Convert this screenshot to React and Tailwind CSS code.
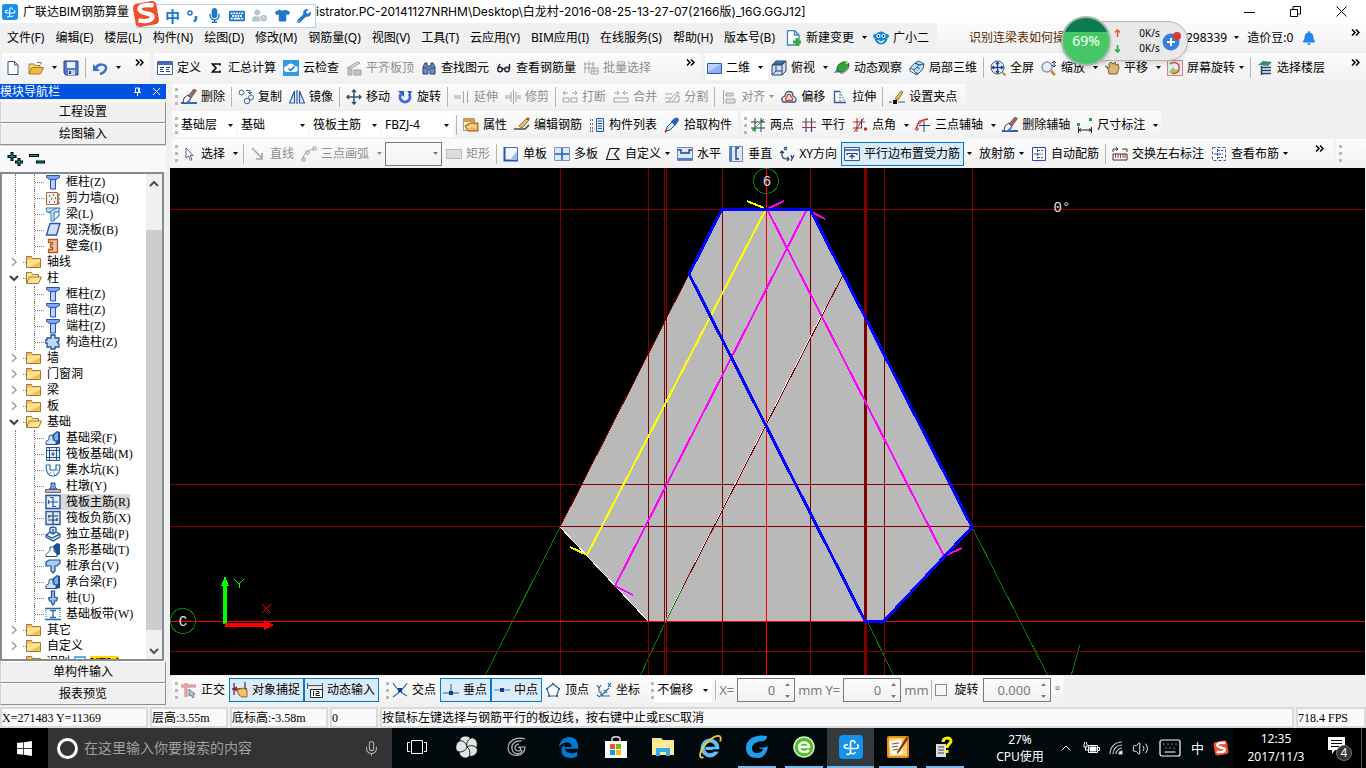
import React, { useState } from 'react';
import { FaWindows, FaMicrophone, FaTshirt, FaWrench, FaKeyboard, FaBell, FaUserClock } from 'react-icons/fa';
import { Mic, Volume2, ChevronUp, Keyboard } from 'lucide-react';

const B = '#2c5aa8';
const N = '#24406e';
const G = '#a3a3a3';

// 16x16 drawings used by the toolbars and the tree
const icons = {
  newDoc: <path d="M3 1.5h6.5L13 5v9.5H3zM9.5 1.5V5H13" fill="#fff" stroke="#38587f" />,
  open: (
    <>
      <path d="M1 14V4h5l1 1.500h5V8" fill="#f5d67d" stroke="#a87c23" />
      <path d="M1 14l3-6.500h11.500L12.500 14z" fill="#f3b945" stroke="#a87c23" />
      <path d="M9 2.500h4v2" fill="none" stroke="#4f7fc0" />
    </>
  ),
  save: (
    <>
      <path d="M1 1h14v14H3l-2-2z" fill="#5a78cc" stroke="#27408c" />
      <path d="M4 2h8v6H4z" fill="#e9effc" />
      <path d="M5 10h7v5H5z" fill="#c7d2ea" />
      <path d="M6 11h2v3H6z" fill="#27408c" />
    </>
  ),
  undo: (
    <>
      <path d="M4 8c2-5 10-4 10 0 0 3-3 5-6 6" fill="none" stroke="#3a6fd0" strokeWidth="2.500" />
      <path d="M1 4v7h7z" fill="#3a6fd0" />
    </>
  ),
  define: (
    <>
      <path d="M.5 1.500h15v13H.5z" fill="#fff" stroke="#4a6896" />
      <path d="M1 2h14v3H1z" fill="#3f6fba" />
      <path d="M3 7.500h4M3 11.500h4M9 7.500h4M9 11.500h4M3 9.500h3M9 9.500h3" stroke={N} />
    </>
  ),
  sigma: <path d="M12 5.500V4H4.500L8 8l-3.500 4H12v-1.500" fill="none" stroke="#111" strokeWidth="1.700" />,
  cloud: (
    <>
      <path d="M0 0h16v16H0z" fill="#2d9be8" />
      <path d="M4 12a3 3 0 010-6 4 4 0 017.500 0A3 3 0 0112 12z" fill="#fff" />
      <path d="M5.500 8.500l2 2 4-4" fill="none" stroke="#1d6fc0" strokeWidth="1.500" />
    </>
  ),
  slabTop: (
    <>
      <path d="M1 8l10-6 3 1-8 5z" fill="#d8d8d8" stroke={G} />
      <path d="M2 9h4v6H2zM8 10h7v5H8z" fill="#c4c4c4" stroke={G} />
    </>
  ),
  find: <path d="M2 14V7l2-4h2v3h4V3h2l2 4v7h-5V9H7v5zM3 8h3M10 8h3" fill="#6f8bc4" stroke={N} />,
  glasses: (
    <g fill="none" stroke="#1d2430" strokeWidth="1.400">
      <circle cx="4" cy="9.500" r="2.300" />
      <circle cx="11" cy="9.500" r="2.300" />
      <path d="M6 9h3M2 8l2-4M13.500 9V4" />
    </g>
  ),
  batch: <path d="M2 2v11M6 1v12M10 2v6M1 4h11M1 8h8M9 8h6v6H8zM9 11h6M11 8v6" fill="none" stroke={G} />,
  plane: (
    <>
      <path d="M.5 3.500h14v10H.5z" fill="#8eb0f5" stroke="#2f57b5" />
      <path d="M1 4h13L1 12z" fill="#bcd0fa" />
    </>
  ),
  cube: (
    <>
      <path d="M1 5l4-4h10v10l-4 4H1z" fill="#cfe0f3" stroke={N} />
      <path d="M1 5l4-4h10l-4 4z" fill="#3c6ca8" />
      <path d="M11 5h-10M11 5v10M11 5l4-4M5 6v5M5 11l-3 3M5 11h6" stroke={N} fill="none" />
    </>
  ),
  orbit: (
    <>
      <path d="M0 13l4-6 3 5z" fill="#5279d6" />
      <ellipse cx="9" cy="7" rx="6.500" ry="4.500" transform="rotate(-35 9 7)" fill="#34a53a" stroke="#16621b" />
      <path d="M6 13c4 1 7-3 9-6" fill="none" stroke="#999" strokeWidth="1.500" />
      <circle cx="13" cy="2.500" r="1.500" fill="#a5e08a" />
    </>
  ),
  local3d: (
    <g fill="#c2dcf1" stroke="#2a628f">
      <path d="M1 8l5-5 4 2-5 5zM6 3l4-2 5 3-5 1zM5 10l5-5 5-1-1 5-6 6z" />
      <path d="M1 8v3l7 4v-3M8 7l3 2" fill="none" />
    </g>
  ),
  full: (
    <>
      <circle cx="7.500" cy="7.500" r="6.500" fill="#eef4ff" stroke="#3a5a8f" />
      <path d="M7.500 2v11M2 7.500h11M6 4l1.500-2L9 4M6 11l1.500 2L9 11M4 6L2 7.500 4 9M11 6l2 1.500L11 9" fill="none" stroke="#1d4390" strokeWidth="1.300" />
      <path d="M12.500 12.500l3 3" stroke="#c08a2b" strokeWidth="2" />
    </>
  ),
  zoom: (
    <>
      <circle cx="6" cy="7" r="5" fill="#e9f0fb" stroke="#8b96a8" strokeWidth="1.500" />
      <path d="M10 11l4 4" stroke="#c08a2b" strokeWidth="2.500" />
      <path d="M13 1v5M11 3l2-2 2 2M11 5l2 2 2-2" stroke="#27457d" fill="none" />
    </>
  ),
  pan: <path d="M1 6l3 3 1 5h8l2-6-1-4-2 1-1-3-2 2-2-2-2 2v4z" fill="#d9b673" stroke="#85632a" />,
  rotateView: (
    <>
      <path d="M.5 .5h15v15H.5z" fill="#dff0f8" stroke="#e07e7e" />
      <path d="M2 12l4-5 3 3 2-1v4H2z" fill="#a9c95b" />
      <path d="M3 4a6 6 0 019 1v5a5 5 0 01-7 3" fill="none" stroke="#d8513d" strokeWidth="1.500" />
    </>
  ),
  floors: (
    <>
      <path d="M1 5l5-4 9 1-4 4z" fill="#2f8d83" />
      <path d="M5 7.500h9M5 10.500h9M4 13.500h10M4.500 6v9" stroke={N} strokeWidth="1.500" />
    </>
  ),
  erase: (
    <>
      <path d="M0 14h16" stroke="#3167b3" strokeWidth="2" />
      <path d="M3 9l4-3 3 3-4 5H2z" fill="#fff" stroke="#2f3f61" />
      <path d="M4 14l5-4 1 1-3 3z" fill="#3f7ae0" />
      <path d="M7 7l6-7 2.500 1.500L10 9z" fill="#a86a54" stroke="#333" strokeWidth=".6" />
    </>
  ),
  copy: (
    <g fill="none" stroke="#3b6493">
      <circle cx="3.500" cy="3.500" r="2.500" />
      <circle cx="9" cy="12" r="2.800" />
      <circle cx="13" cy="8.500" r="2.500" />
      <path d="M8 1.500h4v3M10 3l2 2 2-2" stroke="#555" />
    </g>
  ),
  mirror: <path d="M5.500 2v12H0.500zM10.500 2v12h5zM8 1v14" fill="#e4eefc" stroke={B} strokeWidth="1.200" />,
  move: <path d="M8 1v14M1 8h14M6 3l2-2 2 2M6 13l2 2 2-2M3 6L1 8l2 2M13 6l2 2-2 2" fill="none" stroke="#3a5377" strokeWidth="1.500" />,
  rotate: (
    <>
      <path d="M4 5a5 5 0 108 0" fill="none" stroke="#3971d4" strokeWidth="3" />
      <path d="M1 2h6v6zM10 2h5l-2 4z" fill="#2b5fc0" />
    </>
  ),
  extend: <path d="M0 7h7M0 9h7M9.500 2v12M13.500 2v12" stroke={G} fill="none" />,
  trim: <path d="M0 7h6M0 9h6M8.500 1v14M6 3v10M11 3v10M12 7h4M12 9h4" stroke={G} fill="none" />,
  brk: <path d="M1 4h5M10 4h5M3 2L1 4l2 2M13 2l2 2-2 2M1 9h6v4H1zM9 9h6v4H9z" stroke={G} fill="none" />,
  merge: <path d="M1 4h5M10 4h5M4 2l2 2-2 2M12 2l-2 2 2 2M1 9h14v4H1z" stroke={G} fill="none" />,
  split: <path d="M1 5h7M1 13h14V7h-3M1 9h6M4 13l9-10 2 1-7 9" stroke={G} fill="none" />,
  align: <path d="M2.500 1v14M5 4h7v3H5zM5 10h9v4H5z" fill="#ddd" stroke={G} />,
  offset: (
    <>
      <path d="M2 13c-3-4 0-5 2-6 0-6 8-6 8 0 3 1 4 4 2 6z" fill="#fff" stroke="#2d5780" strokeWidth="1.300" />
      <path d="M5 11.500c-2-2 1-3 1-4 0-3 4-3 4 0 1 1 3 2 1 4z" fill="#fbd9d6" stroke="#d44840" strokeWidth="1.300" />
    </>
  ),
  stretch: (
    <>
      <path d="M8 2.500H2.500v11H14" fill="none" stroke={B} strokeWidth="1.300" />
      <path d="M8 2.500l5 11M8 5v8" stroke={B} strokeDasharray="1.500 1.500" fill="none" />
    </>
  ),
  grip: (
    <>
      <path d="M0 13h3M9 13h7" stroke="#555" />
      <path d="M4 11h4v4H4z" fill="#111" />
      <path d="M6 10l6-8 2 1-5 8z" fill="#e7bf5a" stroke="#6b4a18" strokeWidth=".7" />
    </>
  ),
  prop: (
    <>
      <path d="M.5 1.500h11v12H.5z" fill="#fff7e2" stroke="#9c9c9c" />
      <path d="M1 2h10v3H1z" fill="#e39b38" />
      <path d="M2 9l5-3h8v8H5z" fill="#f2b85d" stroke="#8b5912" />
      <path d="M5 11l4-3 4 3" stroke="#fff" fill="none" />
    </>
  ),
  editBar: (
    <>
      <path d="M0 12h11l4-4" fill="none" stroke="#3f5634" strokeWidth="1.700" />
      <path d="M5 9l7-7 3 1-7 8z" fill="#eac064" stroke="#5d4314" strokeWidth=".7" />
      <path d="M12 2l3 1 .500-2-2-.500z" fill="#b2362c" />
    </>
  ),
  list: (
    <>
      <path d="M1 3h4M1 7h4M1 11h4M1 14h4" stroke={N} strokeDasharray="1 1" strokeWidth="1.500" />
      <path d="M7.500 1.500h7v13h-7z" fill="#dfe9fb" stroke={B} />
      <path d="M9 4h4M9 6.500h4M9 9h4M9 11.500h4" stroke={B} />
    </>
  ),
  pick: (
    <>
      <path d="M2 14l1-4 5-5 3 3-5 5z" fill="#d3e6fb" stroke="#234b8d" />
      <path d="M7 4l4-3c3-1 5 1 3 4l-3 4z" fill="#2f62b5" />
      <path d="M1 15l2-2" stroke="#d22" strokeWidth="2" />
    </>
  ),
  twoPt: (
    <>
      <path d="M5 1v14M11 1v14M1 5h14M1 11h14" stroke="#2a3d63" fill="none" />
      <path d="M2 14L14 2" stroke="#3f9c35" />
      <circle cx="12" cy="4" r="1.600" fill="#249027" />
      <circle cx="4" cy="12" r="1.600" fill="#249027" />
    </>
  ),
  parallel: (
    <>
      <path d="M5 1v14M10.500 1v14" stroke="#2b4a87" strokeWidth="1.200" />
      <path d="M1 5h14M1 10.500h14" stroke="#b32c2c" strokeWidth="1.200" />
    </>
  ),
  angle: (
    <>
      <path d="M5 1v14M1 5h12M1 11h9M12 1L2 15" stroke="#a82828" fill="none" />
      <path d="M9.500 2v9" stroke={N} />
      <circle cx="13.500" cy="12" r="1.700" fill="#d62020" />
    </>
  ),
  threePt: (
    <>
      <path d="M1 13c1-7 4-10 12-11" fill="none" stroke="#cc2a2a" strokeWidth="1.300" />
      <path d="M9 4v11M4 8.500h11" stroke={N} />
      <circle cx="2" cy="12" r="1.300" fill="#fff" stroke="#d62020" />
      <circle cx="5" cy="5" r="1.300" fill="#fff" stroke="#d62020" />
    </>
  ),
  dim: (
    <>
      <path d="M1.500 10v6M14.500 10v6M2 13h12M4 11.500L2 13l2 1.500M12 11.500l2 1.500-2 1.500" stroke="#222" fill="none" />
      <path d="M0 6h3v3H0zM12 1h3v3h-3z" fill="#2fa040" />
    </>
  ),
  cursor: <path d="M5 2v10l2.500-2 2 4.500 1.500-1-2-4H12z" fill="#fff" stroke="#53647d" />,
  line: <path d="M2 2l10 10M12 7v6H6" stroke={G} strokeWidth="1.500" fill="none" />,
  arc: <path d="M2 14C2 8 6 4 13 3M1 12h3v3H1zM5 5h3v3H5zM12 1h3v3h-3z" stroke={G} fill="none" />,
  rect: <path d="M.5 3.500h15v9H.5z" fill="#ddd" stroke="#b8b8b8" />,
  single: (
    <>
      <path d="M1.500 1.500h13v13h-13z" fill="#f3f7ff" stroke="#4a6fb8" />
      <path d="M1.500 1v13.500H15" fill="none" stroke="#2856aa" strokeWidth="2" />
      <path d="M7 14l7-9v9z" fill="#9dbdf1" />
    </>
  ),
  multi: (
    <>
      <path d="M.5 1.500h15v13H.5z" fill="#dce9fb" stroke="#7d95c4" />
      <path d="M8 2v12M1 8h14" stroke="#2856aa" strokeWidth="1.500" />
    </>
  ),
  custom: <path d="M1.500 13.500L5 2.500h9L9.500 8l4.500 5.500z" fill="none" stroke="#222" strokeWidth="1.200" />,
  horiz: (
    <>
      <path d="M.5 1.500h15v13H.5z" fill="#dbe9fd" stroke="#6d8ac0" />
      <path d="M1 12h14v2H1z" fill="#4f7ed0" />
      <path d="M1 4h3v3h8V4h3" stroke={N} strokeWidth="1.400" fill="none" />
    </>
  ),
  vert: (
    <>
      <path d="M1.500 .5h13v15h-13z" fill="#dbe9fd" stroke="#6d8ac0" />
      <path d="M2 1h2v14H2z" fill="#4f7ed0" />
      <path d="M11 2H8v11h3" stroke={N} strokeWidth="1.400" fill="none" />
    </>
  ),
  xy: (
    <g fill="none" stroke="#25446f" strokeWidth="1.200">
      <path d="M5 1l3 3M8 1L5 4M12 9l1 3M15 9l-3 6M3 5v4c0 3 2 4 5 4h2M1 7l2-2 2 2M8 11l2 2-2 2" />
    </g>
  ),
  edgeBar: (
    <>
      <path d="M.5 1.500h15v13H.5z" fill="#eaf2fe" stroke="#3358a0" />
      <path d="M1 3h14v2H1z" fill="#4f7ed0" />
      <path d="M3 9V7.500h10V9M8 13V9M5.500 11L8 9l2.500 2" stroke={N} strokeWidth="1.200" fill="none" />
    </>
  ),
  auto: (
    <>
      <path d="M1.500 1.500h13v13h-13z" fill="#fff" stroke="#3b3fb0" />
      <path d="M6.500 3v10M6 4.500h6M3 8h9M6 11.500h6" stroke="#345a9f" strokeDasharray="3 1" fill="none" />
    </>
  ),
  swap: (
    <>
      <path d="M1 6V3h5M15 6V3h-5M4 1L6 3 4 5" stroke="#333" fill="none" />
      <path d="M1 8h14v6H1z" fill="#fff" stroke="#333" />
      <path d="M3.500 8v4M6 8v4M8.500 8v4M11 8v4M13 8v4" stroke="#a33" />
    </>
  ),
  viewBar: (
    <>
      <path d="M1.500 1.500h13v13h-13z" fill="#fff" stroke="#4a4fa8" strokeDasharray="3 2" />
      <path d="M6.500 3v10M6 4.500h6M3 8h9M6 11.500h6" stroke={B} strokeDasharray="3 1" fill="none" />
    </>
  ),
  ortho: (
    <>
      <path d="M0 4h15M5 1v14" stroke="#dfa3a5" strokeWidth="3.500" />
      <path d="M8 7v7l2-1 2 3 1-1-1-3h2z" fill="#b7c4d8" stroke="#5b6e8c" strokeWidth=".8" />
    </>
  ),
  snap: (
    <>
      <path d="M2 1v12M13 0v8M0 7h15M2 7l3-2M2 7l3 2" stroke="#7c2433" fill="none" strokeWidth="1.300" />
      <path d="M5 8l2 5 3 2h5V8l-4-2z" fill="#edc468" stroke="#8b6820" />
    </>
  ),
  dyn: (
    <>
      <path d="M.5 1v6M15.500 1v6M0 3.500h16" stroke="#555" fill="none" />
      <path d="M3.500 7.500h12v8h-12z" fill="#fff" stroke="#222" />
      <path d="M6.500 9v5M9 9.500h3v2H9v2h4" stroke="#222" fill="none" />
    </>
  ),
  cross: (
    <>
      <path d="M1 1c3 5 8 10 14 13M15 1C12 6 7 11 1 15" stroke="#2470b9" strokeWidth="1.300" fill="none" />
      <path d="M6 6h4v4H6z" fill="#143f8d" />
    </>
  ),
  perp: (
    <>
      <path d="M0 11h16M8 2v9" stroke="#2c5aa8" />
      <path d="M6 9h4v4H6z" fill="#143f8d" />
    </>
  ),
  mid: (
    <>
      <path d="M0 8h16" stroke="#4c80bd" />
      <path d="M6 6h4v4H6z" fill="#143f8d" />
    </>
  ),
  vertex: (
    <>
      <path d="M8 2l6 4.500-2.500 7.500h-7L2 6.500z" fill="#fff" stroke="#2b68a8" strokeWidth="1.200" />
      <path d="M7 1h2v2H7zM1 6h2v2H1zM13 6h2v2h-2zM3 13h2v2H3zM11 13h2v2h-2z" fill="#2b68a8" />
    </>
  ),
  coord: <path d="M1 3l2 3 2-3M3 6v3M12 1l3 4M15 1l-3 4M2 10h3v4h9M5 14l8-8M8 8l3 3M1 13l3 2" fill="none" stroke="#2b68a8" strokeWidth="1.200" />,
  doc2: (
    <>
      <path d="M1.500.500h7L13 5v10H1.500zM8.500.500V5H13" fill="#fff" stroke="#3b85bd" strokeWidth="1.300" />
      <path d="M11 8v8M7 12h8" stroke="#37a93a" strokeWidth="3" />
    </>
  ),
  mascot: (
    <>
      <circle cx="8" cy="8" r="6.500" fill="#168bd8" />
      <circle cx="2" cy="6" r="2" fill="#168bd8" />
      <circle cx="14" cy="6" r="2" fill="#168bd8" />
      <circle cx="5.500" cy="6" r="2" fill="#fff" />
      <circle cx="10.500" cy="6" r="2" fill="#fff" />
      <path d="M5 10c2 3 4 3 6 0" stroke="#fff" fill="none" strokeWidth="1.300" />
      <path d="M5.500 5v2M10.500 5v2" stroke="#124" strokeWidth="1.500" />
    </>
  ),
  column: (
    <>
      <path d="M5.500 5h5v10h-5z" fill="#b9d0fa" stroke="#2850a8" />
      <path d="M1.500 1.500h13v2L11 5.500H5L1.500 3.500z" fill="#7fa6f2" stroke="#2850a8" />
    </>
  ),
  shearWall: (
    <>
      <path d="M1.500 2.500h11v12h-11z" fill="#f1eeee" stroke="#ad6a42" />
      <path d="M4 6h1M8 5h1M6 9h1M10 8h1M4 12h1M9 12h1" stroke="#555" strokeWidth="1.500" />
      <path d="M13 3v12M14 5h1M14 9h1M14 13h1" stroke="#ad6a42" strokeWidth="1.500" />
    </>
  ),
  beam: <path d="M1 2h14l-2 4H9v9H6V7L2 6zM4 6l8-4M9 14l5-4V5" fill="#cfe6fa" stroke="#2774b9" />,
  slab: <path d="M5 1.500h10L11.500 13H1.500z" fill="#cfe0fc" stroke="#2857ab" strokeWidth="1.400" />,
  niche: <path d="M3.500 1.500h9v13h-9v-3h4v-2h-2v-3h2v-2h-4z" fill="#f2c49f" stroke="#b05a28" strokeWidth="1.300" />,
  struct: <path d="M6 1h4v3h4v3l-2 1 2 2v3h-4v2H6v-2H2v-4H0V6h2V4h4z" fill="#c3d8f5" stroke="#27509a" strokeWidth="1.300" />,
  fbeam: (
    <>
      <path d="M7 5l5-4 3 1v12l-4 1z" fill="#1c4f91" />
      <path d="M9 5l4-3v8l-3 1z" fill="#7fb0e6" />
      <path d="M1 14.500v-3l3-2V6l2-1 2 1v4l3 1v3.500z" fill="#cfe2f7" stroke="#1f5497" />
    </>
  ),
  raft: <path d="M1.500 1.500h13v13h-13zM4.500 1v14M11.500 1v14M1 4.500h14M1 11.500h14M7 7h2v2H7z" fill="#e6effc" stroke="#1f5497" />,
  sump: <path d="M1 3h4v5h6V3h4M1 3c0 8 3 11 7 11s7-3 7-11M5 11h1M9 12h1M8 10h1M12 8h1" fill="none" stroke="#2868ae" strokeWidth="1.200" />,
  pier: (
    <>
      <path d="M0.500 11.500h15v3H.5z" fill="#bbb" stroke="#666" />
      <path d="M4 11l2-2V5h4v4l2 2z" fill="#7ba4dd" stroke="#2856a3" />
    </>
  ),
  mainBar: (
    <>
      <path d="M1 1.500h14v13H1z" fill="#eaf2ff" stroke="#2856aa" strokeWidth="1.400" />
      <path d="M3 8h10M8 3v10M8 12.500h3M3.500 6v4M5 3.500h3" stroke="#2856aa" strokeWidth="1.200" />
    </>
  ),
  negBar: (
    <>
      <path d="M1 1.500h14v13H1z" fill="#dce9fb" stroke="#2856aa" strokeWidth="1.400" />
      <path d="M3 6h10M3 10h10M8 2v12M4 5v3M12 8v3" stroke="#24406e" strokeWidth="1.200" />
    </>
  ),
  isolated: <path d="M1 9l4-3V2l3-1 3 1v4l4 2v3l-7 4-7-4zM1 9l6 3 8-4M5 6l3 2 3-2M8 3v5" fill="#cfe0f6" stroke="#1f4f8f" strokeWidth="1.200" />,
  strip: (
    <>
      <path d="M8 4l4-3 3 1v10l-3 2z" fill="#1c4f91" />
      <path d="M1 14.500v-2l4-4V5h4v4l3 3v2.500z" fill="#fff" stroke="#1f5497" />
    </>
  ),
  cap: <path d="M1 4l3-2h11v3l-3 3h-2v5l-2 2-2-2V8H1z" fill="#a9cdf0" stroke="#1f4f8f" strokeWidth="1.200" />,
  pile: <path d="M6.500 1h3v6l3 1-1 3h-2v2L8 15l-1.500-2v-2h-2l-1-3 3-1z" fill="#9ebcf6" stroke="#1f4f8f" strokeWidth="1.200" />,
  band: (
    <>
      <path d="M0 2.500h16M0 13.500h16" stroke="#2868ae" strokeWidth="1.400" />
      <path d="M1 4v8M15 4v8" stroke="#2868ae" strokeDasharray="1 1" />
      <path d="M8 4v8M5 11.500h6M5 4.500h6" stroke="#2868ae" strokeWidth="1.300" />
    </>
  ),
  folder: (
    <>
      <path d="M.5 2.500h5l1 2h8v9H.5z" fill="#f0c450" stroke="#a57a1e" />
      <path d="M1 5.500h13v2L4 13H1z" fill="#fbe29a" />
    </>
  ),
  folderOpen: (
    <>
      <path d="M.5 13V2.500h5l1 2h6v3" fill="#f8e3a0" stroke="#a57a1e" />
      <path d="M.5 13.500l3-6.500h12l-3 6.500z" fill="#fae29a" stroke="#a57a1e" />
    </>
  ),
};

const Icon = ({ name }) => (
  <svg viewBox="0 0 16 16" className="h-4 w-4 shrink-0" aria-hidden="true">
    {icons[name]}
  </svg>
);

const Arrow = () => (
  <svg viewBox="0 0 5 3" className="h-[3px] w-[5px] shrink-0 fill-current" aria-hidden="true">
    <path d="M0 0h5L2.500 3z" />
  </svg>
);

const Sep = () => <span className="mr-[3px] ml-[2px] h-5 w-px shrink-0 border-r border-[#b4b4b4]" />;

const Grip = () => <span className="ml-[3px] h-[17px] w-[3px] shrink-0 border-l-[3px] border-dotted border-[#b8b8b8]" />;

const More = () => (
  <button aria-label="更多" className="ml-auto shrink-0 self-start p-[6px]">
    <svg viewBox="0 0 9 7" className="h-[7px] w-[9px]" fill="none" stroke="#000" strokeWidth="1.500">
      <path d="M1 .5l3 3-3 3M5 .5l3 3-3 3" />
    </svg>
  </button>
);

const Tool = ({ icon, label, off, active, menu, split }) => (
  <>
    <button
      disabled={off}
      className={`flex h-6 shrink-0 items-center gap-1 border pr-[3px] pl-[2px] whitespace-nowrap ${
        active ? 'border-[#0078d7] bg-[#dcebf8]' : 'border-transparent'
      } ${off ? 'text-[#8e8e8e]' : ''}`}
    >
      {icon && <Icon name={icon} />}
      {label}
      {menu && <Arrow />}
    </button>
    {split && (
      <button disabled={off} aria-label={`${label}选项`} className={`flex h-6 w-3 shrink-0 items-center justify-center ${off ? 'text-[#8e8e8e]' : ''}`}>
        <Arrow />
      </button>
    )}
  </>
);

const Tools = ({ items }) => items.map((t, i) => (t === '|' ? <Sep key={i} /> : <Tool key={i} {...t} />));

const Combo = ({ label, value, width }) => (
  <label className={`mr-px flex h-6 shrink-0 items-center bg-white pr-1 ${width}`}>
    <select aria-label={label} className="h-full min-w-0 flex-1 appearance-none pl-[3px] outline-none">
      <option>{value}</option>
    </select>
    <Arrow />
  </label>
);

const Bar = ({ children, className = '' }) => (
  <div className={`flex min-w-0 items-center overflow-hidden bg-gradient-to-b from-[#fcfcfc] to-[#f1f1f1] ${className}`}>{children}</div>
);

const menus = ['文件(F)', '编辑(E)', '楼层(L)', '构件(N)', '绘图(D)', '修改(M)', '钢筋量(Q)', '视图(V)', '工具(T)', '云应用(Y)', 'BIM应用(I)', '在线服务(S)', '帮助(H)', '版本号(B)'];

const commonTools = [
  { icon: 'define', label: '定义' },
  { icon: 'sigma', label: '汇总计算' },
  { icon: 'cloud', label: '云检查' },
  { icon: 'slabTop', label: '平齐板顶', off: true },
  { icon: 'find', label: '查找图元' },
  { icon: 'glasses', label: '查看钢筋量' },
  { icon: 'batch', label: '批量选择', off: true },
];

const viewTools = [
  { icon: 'cube', label: '俯视', split: true },
  { icon: 'orbit', label: '动态观察' },
  { icon: 'local3d', label: '局部三维' },
  '|',
  { icon: 'full', label: '全屏' },
  { icon: 'zoom', label: '缩放', split: true },
  { icon: 'pan', label: '平移', split: true },
  { icon: 'rotateView', label: '屏幕旋转', menu: true },
  '|',
  { icon: 'floors', label: '选择楼层' },
];

const editTools = [
  { icon: 'erase', label: '删除' },
  '|',
  { icon: 'copy', label: '复制' },
  { icon: 'mirror', label: '镜像' },
  '|',
  { icon: 'move', label: '移动' },
  { icon: 'rotate', label: '旋转' },
  '|',
  { icon: 'extend', label: '延伸', off: true },
  { icon: 'trim', label: '修剪', off: true },
  '|',
  { icon: 'brk', label: '打断', off: true },
  { icon: 'merge', label: '合并', off: true },
  { icon: 'split', label: '分割', off: true },
  '|',
  { icon: 'align', label: '对齐', off: true, menu: true },
  { icon: 'offset', label: '偏移' },
  { icon: 'stretch', label: '拉伸' },
  '|',
  { icon: 'grip', label: '设置夹点' },
];

const memberTools = [
  '|',
  { icon: 'prop', label: '属性' },
  { icon: 'editBar', label: '编辑钢筋' },
  { icon: 'list', label: '构件列表' },
  { icon: 'pick', label: '拾取构件' },
];

const axisTools = [
  { icon: 'twoPt', label: '两点' },
  { icon: 'parallel', label: '平行' },
  { icon: 'angle', label: '点角', split: true },
  { icon: 'threePt', label: '三点辅轴', split: true },
  { icon: 'erase', label: '删除辅轴' },
  { icon: 'dim', label: '尺寸标注', split: true },
];

const lineTools = [
  { icon: 'cursor', label: '选择', split: true },
  '|',
  { icon: 'line', label: '直线', off: true },
  { icon: 'arc', label: '三点画弧', off: true, split: true },
];

const barTools = [
  { icon: 'rect', label: '矩形', off: true },
  '|',
  { icon: 'single', label: '单板' },
  { icon: 'multi', label: '多板' },
  { icon: 'custom', label: '自定义', menu: true },
  { icon: 'horiz', label: '水平' },
  { icon: 'vert', label: '垂直' },
  { icon: 'xy', label: 'XY方向' },
  { icon: 'edgeBar', label: '平行边布置受力筋', active: true, split: true },
  { label: '放射筋', menu: true },
  { icon: 'auto', label: '自动配筋' },
  '|',
  { icon: 'swap', label: '交换左右标注' },
  { icon: 'viewBar', label: '查看布筋', menu: true },
];

const tree = [
  ['column', '框柱(Z)'],
  ['shearWall', '剪力墙(Q)'],
  ['beam', '梁(L)'],
  ['slab', '现浇板(B)'],
  ['niche', '壁龛(I)'],
  ['folder', '轴线'],
  ['folderOpen', '柱'],
  ['column', '框柱(Z)'],
  ['column', '暗柱(Z)'],
  ['column', '端柱(Z)'],
  ['struct', '构造柱(Z)'],
  ['folder', '墙'],
  ['folder', '门窗洞'],
  ['folder', '梁'],
  ['folder', '板'],
  ['folderOpen', '基础'],
  ['fbeam', '基础梁(F)'],
  ['raft', '筏板基础(M)'],
  ['sump', '集水坑(K)'],
  ['pier', '柱墩(Y)'],
  ['mainBar', '筏板主筋(R)'],
  ['negBar', '筏板负筋(X)'],
  ['isolated', '独立基础(P)'],
  ['strip', '条形基础(T)'],
  ['cap', '桩承台(V)'],
  ['fbeam', '承台梁(F)'],
  ['pile', '桩(U)'],
  ['band', '基础板带(W)'],
  ['folder', '其它'],
  ['folder', '自定义'],
];

const TreeRow = ({ icon, label, selected, onSelect }) => {
  const isFolder = icon.startsWith('folder');
  if (isFolder) {
    const open = icon === 'folderOpen';
    return (
      <li className="flex h-4 items-center">
        <svg viewBox="0 0 12 12" className="ml-[6px] h-3 w-3 shrink-0" aria-hidden="true">
          {open ? (
            <path d="M2 4l4 4 4-4" fill="none" stroke="#404040" strokeWidth="2" />
          ) : (
            <path d="M4 2l4 4-4 4" fill="none" stroke="#a0a0a0" strokeWidth="1.500" />
          )}
        </svg>
        <span className="ml-[3px] w-[3px] border-t border-dotted border-[#808080]" />
        <Icon name={icon} />
        <button className="ml-[5px] whitespace-nowrap">{label}</button>
      </li>
    );
  }
  return (
    <li className="ml-[13px] flex h-4 items-center border-l border-dotted border-[#808080]">
      <span className="ml-[18px] h-full w-px border-l border-dotted border-[#808080]" />
      <span className="w-[9px] border-t border-dotted border-[#808080]" />
      <span className={`ml-px flex h-4 items-center ${selected ? 'bg-[#d9d9d9]' : ''}`}>
        <Icon name={icon} />
        <button onClick={onSelect} className="ml-[5px] whitespace-nowrap">
          {label}
        </button>
      </span>
    </li>
  );
};

const SideButton = ({ children }) => (
  <button className="h-[22px] shrink-0 border border-[#8f8f8f] border-t-white border-l-[#d0d0d0] bg-[#f0f0f0] text-center">{children}</button>
);

const Sidebar = () => {
  const [selected, setSelected] = useState('筏板主筋(R)');

  return (
    <aside className="flex w-[166px] shrink-0 flex-col font-['Liberation_Serif','Noto_Sans_CJK_SC',sans-serif]">
      <div className="mb-[2px] flex h-[15px] shrink-0 items-center justify-between bg-[#0052e0] pr-[5px] text-white">
        <span>模块导航栏</span>
        <span className="flex items-center gap-[10px]">
          <button aria-label="固定">
            <svg viewBox="0 0 9 9" className="h-[9px] w-[9px]">
              <path d="M2.500 5V1h4v4M5.500 1v4M1 5.500h7M4.500 6v3" fill="none" stroke="#fff" />
            </svg>
          </button>
          <button aria-label="关闭">
            <svg viewBox="0 0 9 9" className="h-[9px] w-[9px]">
              <path d="M1 1l7 7M8 1L1 8" fill="none" stroke="#fff" />
            </svg>
          </button>
        </span>
      </div>
      <SideButton>工程设置</SideButton>
      <SideButton>绘图输入</SideButton>
      <div className="flex h-[27px] shrink-0 items-center gap-1 border-t border-[#d8d8d8] bg-[#f9f9f9] pl-[6px]">
        <button aria-label="全部展开">
          <svg viewBox="0 0 18 16" className="h-4 w-[18px]">
            <path d="M6 1v9M1.500 5.500h9M13 7v8M9 11h8" stroke="#000" strokeWidth="3" />
            <path d="M6 2v7M2.500 5.500h7M13 8v6M10 11h6" stroke="#00a3a3" />
          </svg>
        </button>
        <button aria-label="全部折叠">
          <svg viewBox="0 0 18 16" className="h-4 w-[18px]">
            <path d="M1 4.500h10M8 11h9" stroke="#000" strokeWidth="3" />
            <path d="M2 4.500h8M9 11h7" stroke="#00a3a3" />
          </svg>
        </button>
      </div>
      <div className="mr-[2px] flex min-h-0 flex-1 border-2 border-[#868a91] bg-white">
        <ul className="min-w-0 flex-1 overflow-hidden">
          {tree.map(([icon, label], i) => (
            <TreeRow key={i} icon={icon} label={label} selected={label === selected} onSelect={() => setSelected(label)} />
          ))}
          <li className="flex h-4 items-center gap-1 pl-6">
            <Icon name="folder" />
            <span className="whitespace-nowrap">识别</span>
            <span className="h-3 w-3 border-2 border-[#6aa8ea]" />
            <span className="bg-[#ffd800] leading-3 font-bold">NEW</span>
          </li>
        </ul>
        <div className="flex w-[16px] shrink-0 flex-col items-center justify-between bg-[#f0f0f0]">
          <svg viewBox="0 0 10 8" className="mt-[6px] h-2 w-[10px]">
            <path d="M1 6l4-4 4 4" fill="none" stroke="#505050" strokeWidth="2" />
          </svg>
          <span className="mt-[42px] mb-[17px] w-full flex-1 bg-[#cdcdcd]" />
          <svg viewBox="0 0 10 8" className="mb-[4px] h-2 w-[10px]">
            <path d="M1 2l4 4 4-4" fill="none" stroke="#505050" strokeWidth="2" />
          </svg>
        </div>
      </div>
      <SideButton>单构件输入</SideButton>
      <SideButton>报表预览</SideButton>
      <span className="h-[2px] shrink-0" />
    </aside>
  );
};

const verticals = [390, 478, 494, 496, 552, 640, 714, 802];
const horizontals = [41, 316, 358, 483];

const Drawing = () => (
  <main className="mr-px min-h-0 flex-1 bg-black">
    <svg className="block h-full w-full" shapeRendering="crispEdges" fill="none" aria-label="筏板平面图">
      <path d="M552 41H640L802 359 714 453H478L390 359z" fill="#b9b9b9" />
      <g stroke="#008000">
        <path d="M390 359L315 508M496 453L470 508M697 453L724 508M802 359L878 508M910 477L901 508" />
        <circle cx="596" cy="13" r="12.500" />
      </g>
      <g stroke="#800000">
        {verticals.map((x) => (
          <line key={x} x1={x + 0.5} x2={x + 0.5} y1="0" y2="100%" />
        ))}
        {horizontals.map((y) => (
          <line key={y} x1="0" x2="100%" y1={y + 0.5} y2={y + 0.5} />
        ))}
        <line x1="695.500" x2="695.500" y1="0" y2="100%" strokeWidth="3" />
        <path d="M519 106L390 359" />
      </g>
      <g stroke="#f00">
        <line x1="596.500" x2="596.500" y1="0" y2="100%" />
        <line x1="0" x2="100%" y1="453.500" y2="453.500" />
      </g>
      <path d="M390 359L478 453M655 140L496 452" stroke="#fff" />
      <path d="M673 107L512 421" stroke="#800000" />
      <path d="M512 421L496 453" stroke="#008000" />
      <path d="M577 33L594 40M596 41L417 387M400 379L417 387" stroke="#ff0" strokeWidth="2" />
      <path d="M597 41L614 33M597 41L774 388L792 380M655 51L640 43M637 41L445 418L463 427" stroke="#f0f" strokeWidth="2" />
      <path d="M552 41H640L802 359 714 453H695L519 106z" stroke="#00f" strokeWidth="3" />
      <circle cx="13" cy="453" r="12.500" stroke="#008000" />
      <path d="M53 456V418H51L55 408L59 418H57V456z" fill="#0f0" />
      <path d="M55 455H94V452L104 457L94 462V459H55z" fill="#f00" />
      <path d="M64 411L69 416L74 411M69 416V420" stroke="#0f0" />
      <path d="M92 436L101 445M101 436L92 445" stroke="#f00" />
      <g fill="#e0e0e0" fontSize="14" fontFamily="Liberation Mono, monospace" textAnchor="middle">
        <text x="597" y="18">6</text>
        <text x="13" y="458">C</text>
        <text x="892" y="44">0°</text>
      </g>
    </svg>
  </main>
);

const Spin = ({ label, value, width }) => (
  <span className={`flex h-6 shrink-0 items-center border border-[#7a7a7a] text-[#7a7a7a] ${width}`}>
    <input aria-label={label} defaultValue={value} className="min-w-0 flex-1 bg-transparent pr-[10px] text-right outline-none" />
    <span className="mr-1 flex flex-col gap-[9px]">
      <span className="rotate-180">
        <Arrow />
      </span>
      <Arrow />
    </span>
  </span>
);

const statusCell = 'flex items-center border-2 border-[#dadada] bg-[#fafafa] whitespace-nowrap';

const StatusBar = () => (
  <footer className="flex h-[21px] shrink-0 gap-[2px] font-['Liberation_Serif','Noto_Sans_CJK_SC',sans-serif]">
    <span className={`${statusCell} w-[148px]`}>X=271483 Y=11369</span>
    <span className={`${statusCell} w-[78px]`}>层高:3.55m</span>
    <span className={`${statusCell} w-[98px]`}>底标高:-3.58m</span>
    <span className={`${statusCell} w-[48px]`}>0</span>
    <span className={`${statusCell} flex-1`}>按鼠标左键选择与钢筋平行的板边线，按右键中止或ESC取消</span>
    <span className={`${statusCell} w-[70px]`}>718.4 FPS</span>
  </footer>
);

const TaskButton = ({ label, wide, running, active, children }) => (
  <button
    aria-label={label}
    className={`flex h-10 shrink-0 flex-col items-center justify-end ${wide ? 'w-[50px]' : 'w-[47px]'} ${active ? 'bg-[#33393c]' : ''}`}
  >
    <span className="flex flex-1 items-center">{children}</span>
    <span className={`h-[2px] ${active ? 'w-full' : 'w-[38px]'} ${running || active ? 'bg-[#76b9ed]' : ''}`} />
  </button>
);

const Cad = ({ className }) => (
  <svg viewBox="0 0 24 24" className={className} aria-hidden="true">
    <rect width="24" height="24" rx="4" fill="#1492ee" />
    <path d="M16 8.500c0-4-4.500-4-4.500 0v8c0 3 4 3 5 .5M9 9.500c-5 0-5 4 0 4h8c3 0 3-3 1-4M11.500 17c0 2-2 3-4 2" fill="none" stroke="#fff" strokeWidth="1.600" />
  </svg>
);

const Sogou = ({ className }) => (
  <svg viewBox="0 0 26 26" className={className} aria-hidden="true">
    <rect x="2" y="2" width="22" height="22" rx="4" transform="rotate(-10 13 13)" fill="#f0502a" />
    <path d="M20 5c-7-1-14 0-13 4s13 3 12 7-8 4-13 3" fill="none" stroke="#fff" strokeWidth="4" />
  </svg>
);

const eShape = 'M1 11C2 4 7 0 12 0c7 0 10 5 10 10v3H8c0 4 4 5 7 5 3 0 5-1 6-2v5c-2 1-4 2-8 2-6 0-10-4-9-9 0-3 2-5 4-6-1 1-1 2-1 3h8c0-3-2-5-5-5-4 0-8 3-9 5z';

const Taskbar = () => (
  <nav className="flex h-10 shrink-0 bg-[#01090c] text-white">
    <button aria-label="开始" className="flex w-12 shrink-0 items-center justify-center bg-black">
      <FaWindows size={17} />
    </button>
    <label className="flex w-[344px] shrink-0 items-center bg-[#333] pr-3 pl-[9px]">
      <span className="mr-[6px] h-[21px] w-[21px] shrink-0 rounded-full border-[3px] border-white" />
      <input aria-label="搜索" placeholder="在这里输入你要搜索的内容" className="min-w-0 flex-1 text-[14px] outline-none placeholder:text-[#a0a0a0]" />
      <Mic size={17} strokeWidth={1.5} className="text-[#b0b0b0]" />
    </label>
    <span className="mr-[3px] flex">
      <TaskButton label="任务视图" wide>
        <svg viewBox="0 0 20 14" className="h-[14px] w-5" fill="none" stroke="#fff">
          <path d="M4.500.500h11v13h-11zM3 2.500H.500v9H3M17 2.500h2.500v9H17" />
        </svg>
      </TaskButton>
      <TaskButton label="风扇" wide>
        <svg viewBox="0 0 22 22" className="h-[22px] w-[22px]" fill="#e2e2e2" stroke="#01090c" strokeWidth=".8">
          {[0, 72, 144, 216, 288].map((a) => (
            <path key={a} d="M11 11C7 11 3 7 4 3c2-4 9-4 11 0 1 3-1 6-4 8z" transform={`rotate(${a} 11 11)`} />
          ))}
        </svg>
      </TaskButton>
      <TaskButton label="广联达" wide>
        <svg viewBox="0 0 20 20" className="h-5 w-5" fill="none" stroke="#bbb" strokeWidth="1.200">
          <path d="M18 2C8-1 1 5 1 11c0 10 17 10 17-1h-7M15 4C8 3 4 7 5 12c1 6 9 6 10 1M12 7c-4 0-6 6-1 7 4 0 3-4 1-3" />
        </svg>
      </TaskButton>
    </span>
    <TaskButton label="Edge">
      <svg viewBox="0 0 23 23" className="h-[21px] w-[21px]">
        <path d={eShape} fill="#0078d7" />
      </svg>
    </TaskButton>
    <TaskButton label="应用商店">
      <svg viewBox="0 0 24 24" className="h-6 w-6">
        <path d="M8 7V4c0-3 8-3 8 0v3" fill="none" stroke="#ddd" strokeWidth="1.500" />
        <path d="M1 6h22v17H1z" fill="#fff" />
        <path d="M6 9h5v5H6z" fill="#f25022" />
        <path d="M12 9h5v5h-5z" fill="#7fba00" />
        <path d="M6 15h5v5H6z" fill="#00a4ef" />
        <path d="M12 15h5v5h-5z" fill="#ffb900" />
      </svg>
    </TaskButton>
    <TaskButton label="文件资源管理器">
      <svg viewBox="0 0 24 22" className="h-[22px] w-6">
        <path d="M1 2h9l2 2h11v15H1z" fill="#fbdf8a" />
        <path d="M1 5h22v14H1z" fill="#ffe79c" />
        <path d="M5 20v-8h14v8h-4v-4H9v4z" fill="#35aee8" />
      </svg>
    </TaskButton>
    <TaskButton label="Internet Explorer">
      <svg viewBox="0 0 26 26" className="h-6 w-6" fill="none">
        <circle cx="13" cy="14" r="8" stroke="#5ec0f5" strokeWidth="4.500" />
        <path d="M8 14.500h14" stroke="#5ec0f5" strokeWidth="3.500" />
        <path d="M16 18h8v-2.500h-8z" fill="#01090c" />
        <path d="M6 24c-4 2-5-2-2-8C8 8 17 1 22 1c3 0 3 3 2 6" stroke="#f6c63b" strokeWidth="2" />
      </svg>
    </TaskButton>
    <TaskButton label="广联达服务" running>
      <svg viewBox="0 0 24 24" className="h-6 w-6" fill="#1e9cee">
        <path d="M22 1C12-1 1 3 1 13c0 7 5 10 11 10s10-4 11-12c-3 2-6 2-9 1 1 2 3 2 4 2-1 3-3 4-6 4-3 0-5-2-5-5 0-4 5-7 12-7 2-1 3-3 3-5z" />
      </svg>
    </TaskButton>
    <TaskButton label="浏览器" running>
      <svg viewBox="0 0 22 22" className="h-[22px] w-[22px]" fill="none">
        <circle cx="11" cy="11" r="10" fill="#4fbf26" stroke="#d9f3c9" strokeWidth="1.500" />
        <path d="M16 14c-2 3-10 3-10-3s10-6 10 0H7" stroke="#fff" strokeWidth="2.500" />
      </svg>
    </TaskButton>
    <TaskButton label="钢筋算量" active>
      <Cad className="h-6 w-6" />
    </TaskButton>
    <TaskButton label="笔记" running>
      <svg viewBox="0 0 24 24" className="h-6 w-6">
        <rect x="1" y="1" width="22" height="22" rx="2" fill="#f08c14" />
        <rect x="3" y="3" width="18" height="18" fill="#ffd36b" />
        <path d="M4 5h12v15H4z" fill="#fff8e5" transform="rotate(-10 10 12)" />
        <path d="M6 9l7-1M6 12l6-1M7 15l5-1" stroke="#6a5a4a" />
        <path d="M11 17L20 2l3 1-9 13-3 3z" fill="#8b3a14" />
      </svg>
    </TaskButton>
    <TaskButton label="帮助" running>
      <svg viewBox="0 0 20 22" className="h-[22px] w-5">
        <path d="M1 8h10v13H1z" fill="#ddd" />
        <path d="M3 11h6M3 14h6M3 17h6" stroke="#444" />
        <path d="M8 6c0-5 8-5 8-1 0 3-4 3-4 7M12 14v3" fill="none" stroke="#fff200" strokeWidth="3" />
      </svg>
    </TaskButton>
    <span className="ml-auto flex w-[58px] shrink-0 flex-col items-center justify-center text-[12px] leading-[17px]">
      <span>27%</span>
      <span>CPU使用</span>
    </span>
    <span className="flex w-[184px] shrink-0 items-center justify-between pr-1 pl-[9px]">
      <ChevronUp size={16} strokeWidth={1.5} />
      <svg viewBox="0 0 17 12" className="h-3 w-[17px]" fill="none" stroke="#fff">
        <path d="M5.500 3.500h9v7h-9zM15 5.500h1.500v3H15M1 2v3h3V2M2.500 5v3H5M1.500 0v2M3.500 0v2" />
        <path d="M7 5h6v4H7z" fill="#fff" />
      </svg>
      <svg viewBox="0 0 14 14" className="h-[14px] w-[14px]" fill="none" stroke="#ccc" strokeWidth="1.200">
        <path d="M1 13C1 6 6 1 13 1M4 13c0-5 4-9 9-9M7 13c0-3 3-6 6-6" />
        <path d="M10 13c0-2 1-3 3-3v3z" fill="#fff" />
      </svg>
      <Volume2 size={17} strokeWidth={1.3} />
      <Keyboard size={24} strokeWidth={1.2} />
      <span className="text-[13px]">中</span>
      <Sogou className="h-4 w-4" />
    </span>
    <span className="flex w-[86px] shrink-0 flex-col items-center justify-center bg-black text-[12px] leading-[18px]">
      <span>12:35</span>
      <span>2017/11/3</span>
    </span>
    <button aria-label="通知" className="flex w-[42px] shrink-0 items-center justify-center bg-black">
      <svg viewBox="0 0 26 26" className="h-[26px] w-[26px]">
        <path d="M1 2h17v13H8l-3 4v-4H1z" fill="#fff" />
        <path d="M4 5.500h11M4 8.500h11M4 11.500h8" stroke="#000" />
        <circle cx="17" cy="18" r="7.500" fill="#333" stroke="#777" />
        <text x="17" y="22" textAnchor="middle" fontSize="12" fill="#fff">
          4
        </text>
      </svg>
    </button>
    <span className="w-[5px] shrink-0 border-l border-[#555] bg-black" />
  </nav>
);

const ImeBar = () => (
  <div className="absolute top-0 left-[132px] flex items-center">
    <Sogou className="z-10 -mr-6 h-7 w-7" />
    <div className="mt-[3px] flex h-6 w-[180px] items-center justify-between border border-[#b9cfe6] bg-white pr-1 pl-7 text-[#1f78cc]">
      <span className="text-[15px] font-bold">中</span>
      <svg viewBox="0 0 12 12" className="h-3 w-3">
        <circle cx="3" cy="3" r="2" fill="none" stroke="#1f78cc" strokeWidth="1.500" />
        <path d="M9 6v2c0 2-1 3-2 4" fill="none" stroke="#1f78cc" strokeWidth="2.500" />
      </svg>
      <FaMicrophone size={15} />
      <FaKeyboard size={16} />
      <FaUserClock size={15} className="text-[#b8c4d0]" />
      <FaTshirt size={15} />
      <FaWrench size={14} />
    </div>
  </div>
);

const SpeedBall = () => (
  <div className="absolute top-4 right-[178px] z-10 flex items-center">
    <div className="z-10 -mr-7 flex h-[50px] w-[50px] items-center justify-center rounded-full border-2 border-[#a9b5ae] bg-[linear-gradient(#0d7a50_30%,#45c765_30%)] text-[14px] text-white shadow-md">
      69%
    </div>
    <div className="flex h-10 w-[105px] items-center justify-between rounded-full border border-[#b5b5b5] bg-[#e9e9e9] pr-[5px] pl-[30px] text-[10px] leading-[15px] shadow-md">
      <span className="flex flex-col gap-2">
        <svg viewBox="0 0 7 8" className="h-2 w-[7px]" fill="none" stroke="#ea5a3c" strokeWidth="1.600">
          <path d="M3.500 8V1M1 3.500L3.500 1 6 3.500" />
        </svg>
        <svg viewBox="0 0 7 8" className="h-2 w-[7px]" fill="none" stroke="#23a84b" strokeWidth="1.600">
          <path d="M3.500 0v7M1 4.500L3.500 7 6 4.500" />
        </svg>
      </span>
      <span className="ml-4 flex flex-col whitespace-nowrap">
        <span>0K/s</span>
        <span>0K/s</span>
      </span>
      <svg viewBox="0 0 20 20" className="h-5 w-5 shrink-0">
        <circle cx="9" cy="11" r="8.500" fill="#3c7edb" />
        <path d="M9 7v8M5 11h8" stroke="#fff" strokeWidth="2" />
        <circle cx="15" cy="5" r="4" fill="#d63a33" />
      </svg>
    </div>
  </div>
);

const App = () => (
  <div className="relative flex h-screen flex-col overflow-hidden bg-[#f0f0f0] font-['Noto_Sans','Noto_Sans_CJK_SC',sans-serif] text-[12px] leading-4 text-black">
    <header className="flex h-[23px] shrink-0 items-center bg-white pl-[2px] font-['Inter','Noto_Sans_CJK_SC',sans-serif]">
      <Cad className="mr-[5px] h-4 w-4" />
      <span className="w-[293px] shrink-0 whitespace-nowrap">广联达BIM钢筋算量</span>
      <span className="whitespace-nowrap">istrator.PC-20141127NRHM\Desktop\白龙村-2016-08-25-13-27-07(2166版)_16G.GGJ12]</span>
      <span className="ml-auto flex items-center gap-[35px] pr-[19px]">
        <button aria-label="最小化">
          <svg viewBox="0 0 11 11" className="h-[11px] w-[11px]" stroke="#000">
            <path d="M0 6.500h11" />
          </svg>
        </button>
        <button aria-label="还原">
          <svg viewBox="0 0 11 11" className="h-[11px] w-[11px]" stroke="#000" fill="none">
            <path d="M.500 3.500h7v7h-7zM3 3V.500h7.500V8H8" />
          </svg>
        </button>
        <button aria-label="关闭窗口">
          <svg viewBox="0 0 11 11" className="h-[11px] w-[11px]" stroke="#000">
            <path d="M.500.500l10 10M10.500.500l-10 10" />
          </svg>
        </button>
      </span>
    </header>
    <ImeBar />
    <SpeedBall />

    <div className="flex h-[29px] shrink-0 items-center">
      <div className="flex w-[937px] shrink-0 items-center pl-[7px]">
        <div className="flex gap-[11px]">
          {menus.map((m) => (
            <button key={m} className="whitespace-nowrap">
              {m}
            </button>
          ))}
        </div>
        <span className="ml-2 flex">
          <Tool icon="doc2" label="新建变更" split />
          <Tool icon="mascot" label="广小二" />
        </span>
      </div>
      <Bar className="h-full flex-1">
        <a href="#help" className="w-[249px] shrink-0 pl-8 whitespace-nowrap text-[#5b2c00]">
          识别连梁表如何操
        </a>
        <button className="flex items-center gap-[7px]">
          298339
          <Arrow />
        </button>
        <button className="ml-2 shrink-0">造价豆:0</button>
        <FaBell size={14} className="ml-[9px] shrink-0 text-[#1e88f0]" />
        <More />
      </Bar>
    </div>

    <div className="flex h-8 shrink-0 gap-1 pt-px pb-[2px] pl-[2px]">
      <Bar className="w-[148px] shrink-0">
        <Tool icon="newDoc" />
        <Tool icon="open" split />
        <Tool icon="save" />
        <Sep />
        <Tool icon="undo" split />
        <More />
      </Bar>
      <Bar className="w-[547px] shrink-0">
        <Tools items={commonTools} />
        <More />
      </Bar>
      <Bar className="flex-1">
        <span className="flex items-center bg-white pl-[2px]">
          <Icon name="plane" />
          <Combo label="视图" value="二维" width="w-[44px]" />
        </span>
        <Tools items={viewTools} />
        <More />
      </Bar>
    </div>

    <div className="flex min-h-0 flex-1 gap-1">
      <Sidebar />
      <div className="flex min-w-0 flex-1 flex-col">
        <div className="flex h-[27px] shrink-0 pb-[2px] pl-[2px]">
          <Bar className="pr-1">
            <Grip />
            <Tools items={editTools} />
          </Bar>
        </div>
        <div className="flex h-7 shrink-0 gap-[3px] pl-[2px]">
          <Bar className="pr-[2px]">
            <Grip />
            <Combo label="楼层" value="基础层" width="w-[59px]" />
            <Combo label="构件类型" value="基础" width="w-[71px]" />
            <Combo label="构件种类" value="筏板主筋" width="w-[71px]" />
            <Combo label="构件" value="FBZJ-4" width="w-[71px]" />
            <Tools items={memberTools} />
          </Bar>
          <Bar>
            <Grip />
            <Tools items={axisTools} />
          </Bar>
        </div>
        <div className="flex h-[29px] shrink-0 gap-[2px] pl-[2px]">
          <Bar className="flex-1 pr-1">
            <Grip />
            <Tools items={lineTools} />
            <label className="mr-px flex h-6 w-[57px] shrink-0 items-center border border-[#7a7a7a] pr-[3px] text-[#7a7a7a]">
              <select aria-label="画弧方式" className="min-w-0 flex-1 appearance-none outline-none">
                <option></option>
              </select>
              <Arrow />
            </label>
            <Tools items={barTools} />
            <More />
          </Bar>
          <Bar className="w-[30px] shrink-0">
            <Grip />
          </Bar>
        </div>

        <Drawing />

        <div className="flex h-8 shrink-0 items-center pb-[2px] pl-[2px]">
          <Bar className="h-7 pr-1">
            <Grip />
            <Tool icon="ortho" label="正交" />
            <Tool icon="snap" label="对象捕捉" active />
            <Tool icon="dyn" label="动态输入" active />
          </Bar>
          <Bar className="h-7 pr-1">
            <Grip />
            <Tool icon="cross" label="交点" />
            <Tool icon="perp" label="垂点" active />
            <Tool icon="mid" label="中点" active />
            <Tool icon="vertex" label="顶点" />
            <Tool icon="coord" label="坐标" />
          </Bar>
          <Bar className="h-7">
            <Grip />
            <Combo label="偏移方式" value="不偏移" width="w-[58px]" />
            <Sep />
            <span className="flex items-center gap-[3px] text-[13px] text-[#7a7a7a]">
              X=
              <Spin label="X 偏移" value="0" width="w-[58px]" />
              mm
              <span>Y=</span>
              <Spin label="Y 偏移" value="0" width="w-[58px]" />
              mm
            </span>
            <Sep />
            <label className="flex items-center gap-2">
              <input type="checkbox" className="h-3 w-3 appearance-none border border-[#8a8a8a]" />
              旋转
            </label>
            <span className="ml-1 flex items-center gap-1 pr-1 text-[13px] text-[#7a7a7a]">
              <Spin label="旋转角度" value="0.000" width="w-[68px]" />°
            </span>
          </Bar>
        </div>
      </div>
    </div>

    <StatusBar />
    <Taskbar />
  </div>
);

export default App;
